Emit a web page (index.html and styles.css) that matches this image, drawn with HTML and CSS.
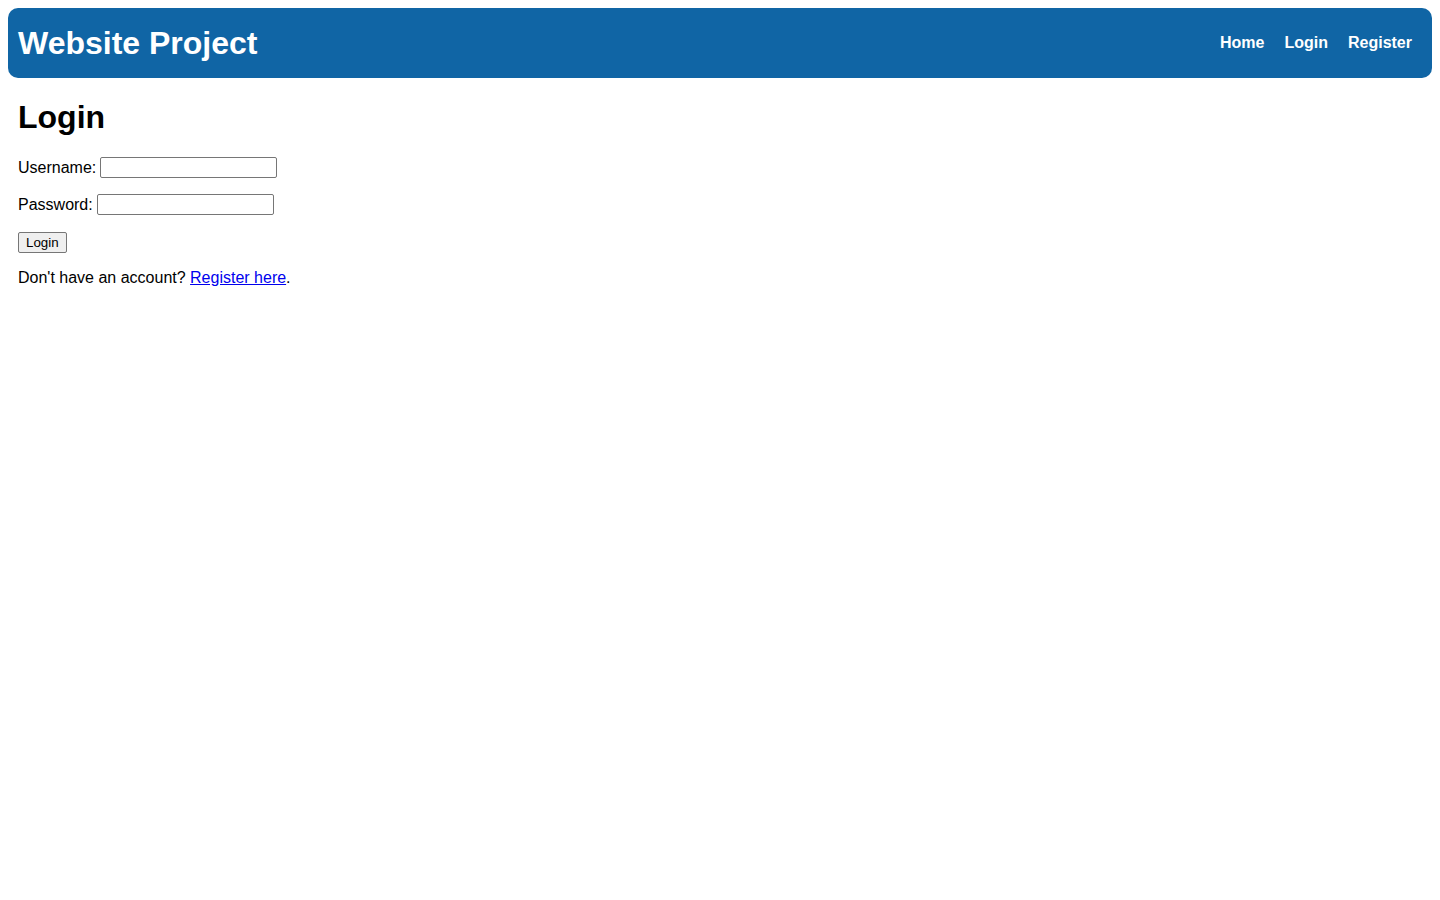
FILE: index.html
```html
<!DOCTYPE html>
<html lang="en">
<head>
<meta charset="utf-8">
<title>Login - Website Project</title>
<link rel="stylesheet" href="styles.css">
</head>
<body>
<header class="site-header">
  <h1 class="brand">Website Project</h1>
  <nav class="nav">
    <a href="#">Home</a>
    <a href="#">Login</a>
    <a href="#">Register</a>
  </nav>
</header>
<main class="content">
  <h2 class="page-title">Login</h2>
  <form class="login-form">
    <div class="row">
      <label for="u">Username:</label>
      <input type="text" id="u" class="field">
    </div>
    <div class="row">
      <label for="p">Password:</label>
      <input type="password" id="p" class="field">
    </div>
    <div class="row row-actions">
      <button type="button" class="btn">Login</button>
    </div>
  </form>
  <p class="note">Don't have an account? <a href="#" class="link">Register here</a>.</p>
</main>
</body>
</html>
```
FILE: styles.css
```css
html, body {
  background: #ffffff;
}
body {
  margin: 8px;
  font-family: "Liberation Sans", Arial, sans-serif;
  font-size: 16px;
  color: #000;
}
.site-header {
  display: flex;
  align-items: center;
  justify-content: space-between;
  height: 70px;
  padding: 0 20px 0 10px;
  background: #1065a5;
  border-radius: 10px;
  box-sizing: border-box;
}
.brand {
  margin: 0;
  font-size: 32px;
  font-weight: bold;
  color: #fff;
}
.nav {
  display: flex;
  gap: 20px;
}
.nav a {
  color: #fff;
  font-weight: bold;
  font-size: 16px;
  text-decoration: none;
}
.content {
  padding: 0 10px;
}
.page-title {
  margin: 21px 0 21px;
  font-size: 32px;
  font-weight: bold;
}
.row {
  display: flex;
  align-items: center;
  gap: 4px;
  margin-bottom: 16px;
  height: 21px;
}
.row-actions {
  margin-top: 17px;
}
.field {
  width: 177px;
  height: 21px;
  box-sizing: border-box;
  border: 1px solid #767676;
  border-radius: 2px;
  padding: 1px 2px;
  margin: 0;
  font-family: "Liberation Sans", Arial, sans-serif;
  font-size: 13px;
}
.btn {
  height: 21px;
  box-sizing: border-box;
  padding: 1px 7px;
  margin: 0;
  border: 1px solid #767676;
  border-radius: 2px;
  background: #efefef;
  font-family: "Liberation Sans", Arial, sans-serif;
  font-size: 13.33px;
  color: #000;
}
.note {
  margin: 16px 0;
}
.link {
  color: #0000ee;
}
```
